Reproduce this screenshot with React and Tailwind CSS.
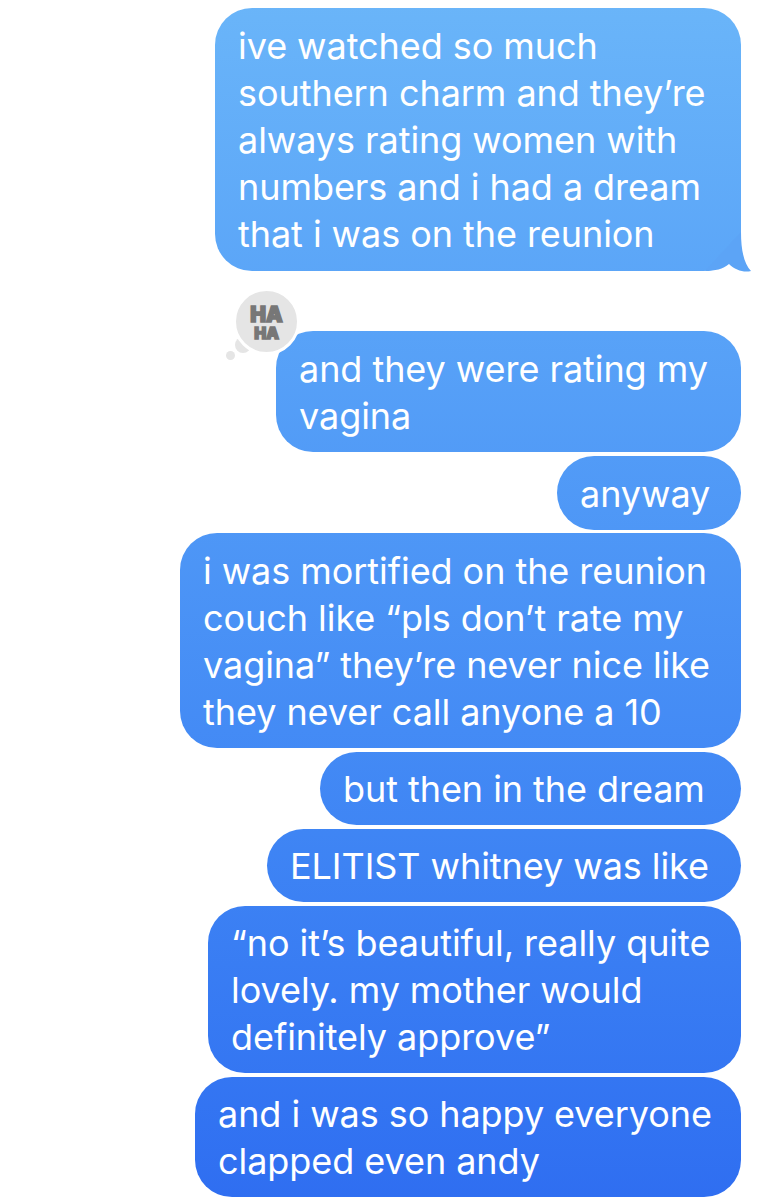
import React from 'react';

const bubbles = [
  { size: 'w-[526px] h-[263px] pt-[15px]', lines: ['ive watched so much', 'southern charm and they’re', 'always rating women with', 'numbers and i had a dream', 'that i was on the reunion'], tail: true },
  { size: 'w-[465px] h-[121px] mt-[56px] pt-[15px]', lines: ['and they were rating my', 'vagina'], reaction: true },
  { size: 'w-[184px] h-[74px] pt-[15px]', lines: ['anyway'] },
  { size: 'w-[561px] h-[215px] -mt-px pt-[15px]', lines: ['i was mortified on the reunion', 'couch like “pls don’t rate my', 'vagina” they’re never nice like', 'they never call anyone a 10'] },
  { size: 'w-[421px] h-[73px] pt-[14px]', lines: ['but then in the dream'] },
  { size: 'w-[474px] h-[73px] pt-[14px]', lines: ['ELITIST whitney was like'] },
  { size: 'w-[533px] h-[167px] pt-[14px]', lines: ['“no it’s beautiful, really quite', 'lovely. my mother would', 'definitely approve”'] },
  { size: 'w-[546px] h-[120px] pt-[14px]', lines: ['and i was so happy everyone', 'clapped even andy'] },
];

// speech tail on the first bubble
function Tail() {
  return (
    <svg className="absolute left-[490px] top-[224px]" width="48" height="42" viewBox="0 0 48 42" fill="#5ca4f6">
      <path d="M36 0 C36 18 39 32 46 39 C39 41 30 38 24 32 C18 37 10 39 0 39 Z" />
    </svg>
  );
}

// tapback bubble, hangs off the top left corner
function Reaction() {
  return (
    <div className="absolute left-[-52px] top-[-46px] w-[80px] h-[80px]">
      <div className="absolute left-[2px] top-[66px] w-[9px] h-[9px] rounded-full bg-[#e5e5e5]" />
      <div className="absolute left-[11px] top-[52px] w-[16px] h-[16px] rounded-full bg-[#e5e5e5]" />
      <div className="absolute left-[9px] top-[3px] w-[67px] h-[67px] rounded-full bg-[#e5e5e5] border-[3px] border-white flex flex-col items-center justify-center pt-[3px] text-[#777777] font-black [-webkit-text-stroke:1.5px_#777777]">
        <span className="text-[21px] leading-[20px]">HA</span>
        <span className="text-[16px] leading-[16px]">HA</span>
      </div>
    </div>
  );
}

export default function App() {
  return (
    <div className="min-h-[1200px] bg-white flex flex-col items-end gap-1 pt-2 pr-[38px] font-['Inter',sans-serif]">
      {bubbles.map((b, i) => (
        <div
          key={i}
          className={`relative ${b.size} shrink-0 rounded-[37px] pl-[23px] pr-[33px] text-white text-[36px] leading-[47px] tracking-[-0.06px] whitespace-nowrap bg-gradient-to-b from-[#6ab5f9] to-[#2f6ef1] bg-fixed`}
        >
          {b.lines.map((l, j) => (
            <div key={j}>{l}</div>
          ))}
          {b.tail && <Tail />}
          {b.reaction && <Reaction />}
        </div>
      ))}
    </div>
  );
}
